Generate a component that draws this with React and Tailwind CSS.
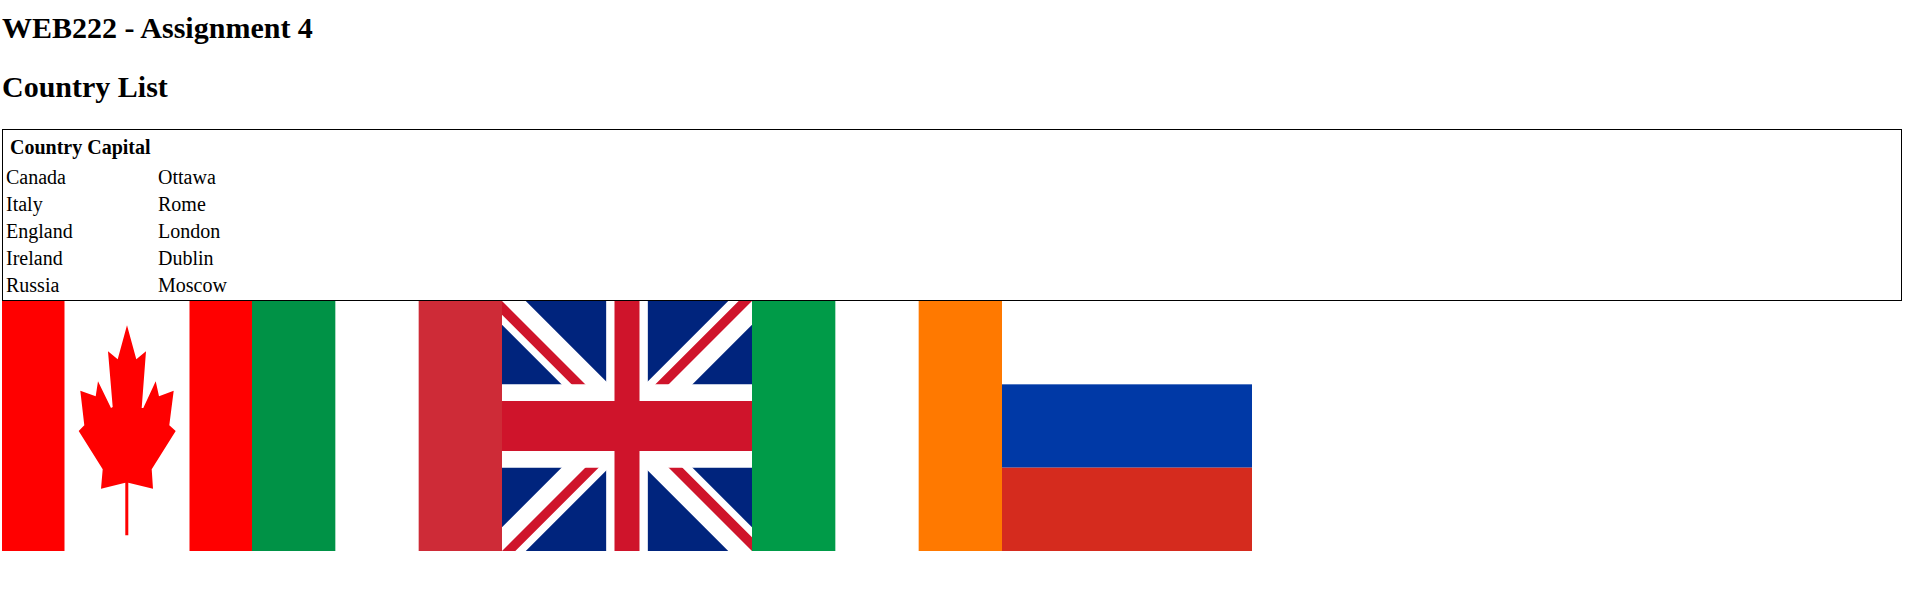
import React from 'react';

const rows = [
  ['Canada', 'Ottawa'],
  ['Italy', 'Rome'],
  ['England', 'London'],
  ['Ireland', 'Dublin'],
  ['Russia', 'Moscow'],
];

function Canada() {
  return (
    <svg viewBox="0 0 250 250" className="w-[250px] h-[250px] block shrink-0">
      <rect width="250" height="250" fill="#fff" />
      <rect width="62.5" height="250" fill="#f00" />
      <rect x="187.5" width="62.5" height="250" fill="#f00" />
      <path
        fill="#f00"
        d="M125 24.3L134.3 58.3L144 50.3L139.7 107L141.3 107L153.7 80.3L157 95.3L171.7 89.7L167.3 124.3L173.7 130L149.7 168.3L151 187.7L126.3 181.7L126.3 234.3L123.3 234.3L123.3 181.7L99 187.7L100.7 168.3L76.7 130L82.3 124.3L78.3 89.7L93.7 95.3L96 80.3L109 107L110.7 106L106 50.3L115.7 58.3Z"
      />
    </svg>
  );
}

function Tricolor({ left, right }) {
  return (
    <svg viewBox="0 0 3 3" className="w-[250px] h-[250px] block shrink-0">
      <rect width="3" height="3" fill="#fff" />
      <rect width="1" height="3" fill={left} />
      <rect x="2" width="1" height="3" fill={right} />
    </svg>
  );
}

function UnionJack() {
  return (
    <svg viewBox="0 0 60 30" preserveAspectRatio="none" className="w-[250px] h-[250px] block shrink-0">
      <rect width="60" height="30" fill="#00247d" />
      <path d="M0,0 L60,30 M60,0 L0,30" stroke="#fff" strokeWidth="5.1" />
      <path
        fill="#cf142b"
        d="M0,0 L30,15 L26.7,15 L0,1.65 Z M60,0 L30,15 L26.8,15 L56.8,0 Z M0,30 L30,15 L33.2,15 L3.2,30 Z M60,30 L30,15 L33.3,15 L60,28.35 Z"
      />
      <path d="M30,0 v30 M0,15 h60" stroke="#fff" strokeWidth="10" />
      <path d="M30,0 v30 M0,15 h60" stroke="#cf142b" strokeWidth="6" />
    </svg>
  );
}

function Russia() {
  return (
    <svg viewBox="0 0 3 3" className="w-[250px] h-[250px] block shrink-0">
      <rect width="3" height="1" fill="#fff" />
      <rect y="1" width="3" height="1" fill="#0039a6" />
      <rect y="2" width="3" height="1" fill="#d52b1e" />
    </svg>
  );
}

export default function App() {
  return (
    <div className="w-[1904px] p-[2px] bg-white text-black font-['Liberation_Serif',serif]">
      <h2 className="text-[30px] leading-[34px] font-bold mt-[9px] mb-[25px]">WEB222 - Assignment 4</h2>
      <h2 className="text-[30px] leading-[34px] font-bold mb-[25px]">Country List</h2>
      <table className="w-full border border-black border-separate border-spacing-[2px] text-[20px] leading-[23px]">
        <thead>
          <tr>
            <th className="text-left font-bold py-[4px] pl-[5px] pr-[1px]" colSpan={2}>Country Capital</th>
          </tr>
        </thead>
        <tbody>
          {rows.map(([country, capital]) => (
            <tr key={country}>
              <td className="w-[150px] p-[1px]">{country}</td>
              <td className="p-[1px]">{capital}</td>
            </tr>
          ))}
        </tbody>
      </table>
      <div className="flex">
        <Canada />
        <Tricolor left="#009246" right="#ce2b37" />
        <UnionJack />
        <Tricolor left="#009b48" right="#ff7900" />
        <Russia />
      </div>
    </div>
  );
}
